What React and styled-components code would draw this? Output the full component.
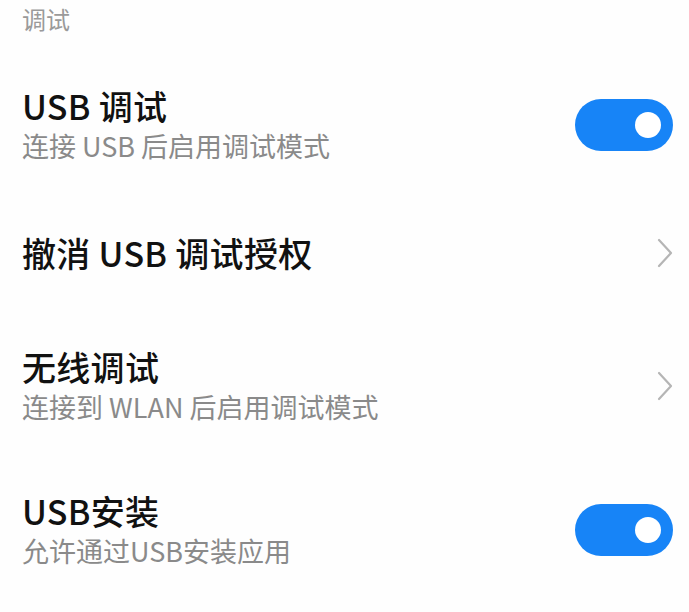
import React from "react";
import styled, { createGlobalStyle } from "styled-components";

const Global = createGlobalStyle`
  html, body { margin: 0; padding: 0; background: #fefefe; }
  body { font-family: "Noto Sans CJK SC", "Noto Sans", sans-serif; -webkit-font-smoothing: antialiased; }
`;

const Page = styled.div`
  width: 689px;
  background: #fefefe;
`;

const SectionHeader = styled.div`
  padding: 4px 22px 19px;
  font-size: 24px;
  line-height: 30px;
  color: #9a9a9a;
`;

const Row = styled.div`
  display: flex;
  align-items: center;
  box-sizing: border-box;
  min-height: ${(p) => (p.$single ? "112px" : "117px")};
  padding: 33px 16px 34px 22px;
  margin-bottom: ${(p) => (p.$single ? "5px" : "0")};
`;

const TextCol = styled.div`
  flex: 1;
  display: flex;
  flex-direction: column;
  gap: 3px;
`;

const Title = styled.div`
  font-size: 34px;
  line-height: 40px;
  font-weight: 500;
  letter-spacing: 0.3px;
  color: #111;
`;

const Subtitle = styled.div`
  font-size: 27px;
  line-height: 34px;
  color: #8a8a8a;
`;

const Toggle = styled.div`
  width: 98px;
  height: 52px;
  border-radius: 26px;
  background: ${(p) => (p.$on ? "#1784f7" : "#d9d9d9")};
  display: flex;
  align-items: center;
  justify-content: ${(p) => (p.$on ? "flex-end" : "flex-start")};
  padding: 0 12px;
  box-sizing: border-box;
  flex-shrink: 0;
`;

const Knob = styled.div`
  width: 26px;
  height: 26px;
  border-radius: 50%;
  background: #fff;
`;

const Chevron = () => (
  <svg width="16" height="30" viewBox="0 0 16 30" style={{ flexShrink: 0 }}>
    <polyline
      points="2,2 14,15 2,28"
      fill="none"
      stroke="#b5b5b5"
      strokeWidth="2.2"
      strokeLinecap="round"
      strokeLinejoin="round"
    />
  </svg>
);

const items = [
  { title: "USB 调试", sub: "连接 USB 后启用调试模式", type: "toggle" },
  { title: "撤消 USB 调试授权", type: "chevron" },
  { title: "无线调试", sub: "连接到 WLAN 后启用调试模式", type: "chevron" },
  { title: "USB安装", sub: "允许通过USB安装应用", type: "toggle" },
];

export default function App() {
  return (
    <Page>
      <Global />
      <SectionHeader>调试</SectionHeader>
      {items.map((it) => (
        <Row key={it.title} $single={!it.sub}>
          <TextCol>
            <Title>{it.title}</Title>
            {it.sub && <Subtitle>{it.sub}</Subtitle>}
          </TextCol>
          {it.type === "toggle" ? (
            <Toggle $on>
              <Knob />
            </Toggle>
          ) : (
            <Chevron />
          )}
        </Row>
      ))}
    </Page>
  );
}
